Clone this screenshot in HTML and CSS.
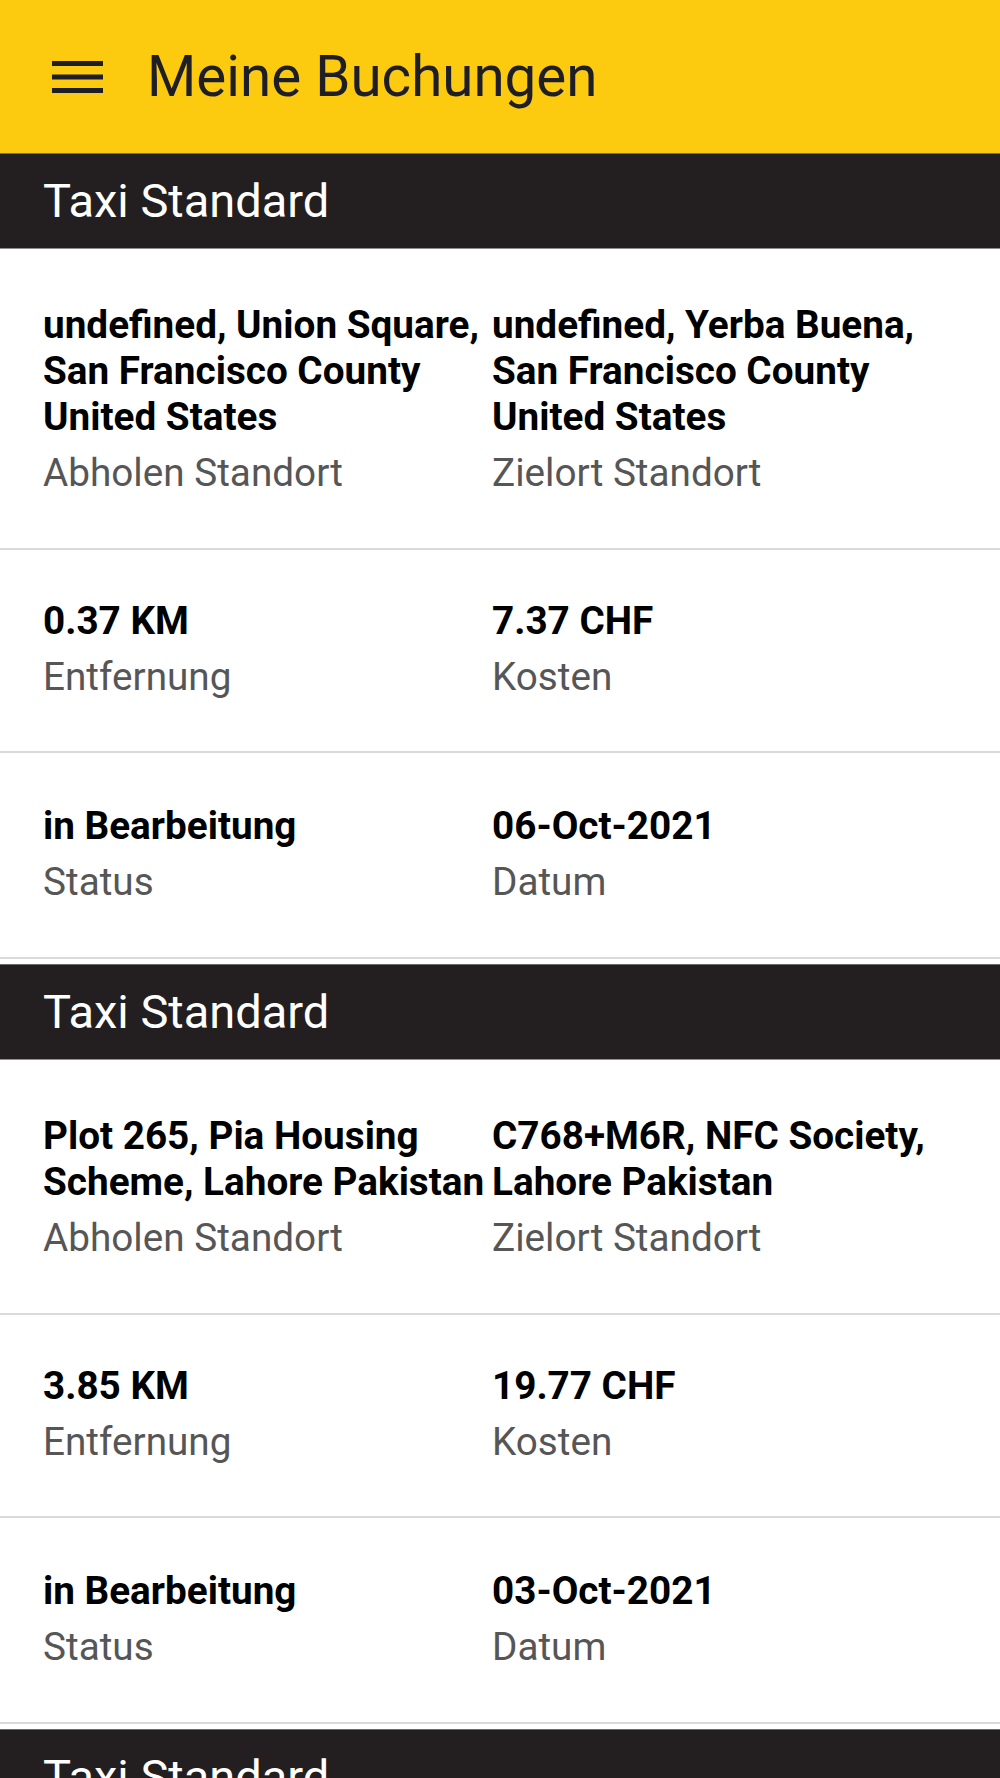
FILE: index.html
```html
<!DOCTYPE html>
<html lang="de">
<head>
    <meta charset="UTF-8">
    <meta name="viewport" content="width=device-width, initial-scale=1.0">
    <title>Meine Buchungen</title>
    <link rel="stylesheet" href="styles.css">
</head>
<body>
    <header class="toolbar">
        <button class="menu-btn" aria-label="Menü">
            <svg width="51" height="32" viewBox="0 0 51 32">
                <rect x="0" y="0" width="51" height="5"/>
                <rect x="0" y="13.5" width="51" height="5"/>
                <rect x="0" y="27" width="51" height="5"/>
            </svg>
        </button>
        <h1 class="toolbar-title">Meine Buchungen</h1>
    </header>

    <main class="booking-list">
        <!-- Buchung 1 -->
        <section class="booking">
            <h2 class="booking-title">Taxi Standard</h2>
            <div class="booking-row address-row">
                <div class="field">
                    <p class="field-value">undefined, Union Square, San Francisco County United States</p>
                    <p class="field-label">Abholen Standort</p>
                </div>
                <div class="field">
                    <p class="field-value">undefined, Yerba Buena, San Francisco County United States</p>
                    <p class="field-label">Zielort Standort</p>
                </div>
            </div>
            <div class="booking-row">
                <div class="field">
                    <p class="field-value">0.37 KM</p>
                    <p class="field-label">Entfernung</p>
                </div>
                <div class="field">
                    <p class="field-value">7.37 CHF</p>
                    <p class="field-label">Kosten</p>
                </div>
            </div>
            <div class="booking-row last-row">
                <div class="field">
                    <p class="field-value">in Bearbeitung</p>
                    <p class="field-label">Status</p>
                </div>
                <div class="field">
                    <p class="field-value">06-Oct-2021</p>
                    <p class="field-label">Datum</p>
                </div>
            </div>
        </section>

        <!-- Buchung 2 -->
        <section class="booking">
            <h2 class="booking-title">Taxi Standard</h2>
            <div class="booking-row address-row">
                <div class="field">
                    <p class="field-value">Plot 265, Pia Housing Scheme, Lahore Pakistan</p>
                    <p class="field-label">Abholen Standort</p>
                </div>
                <div class="field">
                    <p class="field-value">C768+M6R, NFC Society, Lahore Pakistan</p>
                    <p class="field-label">Zielort Standort</p>
                </div>
            </div>
            <div class="booking-row">
                <div class="field">
                    <p class="field-value">3.85 KM</p>
                    <p class="field-label">Entfernung</p>
                </div>
                <div class="field">
                    <p class="field-value">19.77 CHF</p>
                    <p class="field-label">Kosten</p>
                </div>
            </div>
            <div class="booking-row last-row">
                <div class="field">
                    <p class="field-value">in Bearbeitung</p>
                    <p class="field-label">Status</p>
                </div>
                <div class="field">
                    <p class="field-value">03-Oct-2021</p>
                    <p class="field-label">Datum</p>
                </div>
            </div>
        </section>

        <!-- Buchung 3 -->
        <section class="booking">
            <h2 class="booking-title">Taxi Standard</h2>
        </section>
    </main>
</body>
</html>
```

FILE: styles.css
```css
/* General Styles */
body {
    font-family: Roboto, 'Noto Sans', sans-serif;
    margin: 0;
    padding: 0;
    background-color: #ffffff;
    color: #000000;
}

p,
h1,
h2 {
    margin: 0;
}

/* Toolbar */
.toolbar {
    display: flex;
    align-items: center;
    height: 153px;
    padding-left: 52px;
    background-color: #fcca0e;
}

.menu-btn {
    display: flex;
    padding: 0;
    margin-right: 44px;
    border: none;
    background: none;
    fill: #1e1e26;
    cursor: pointer;
}

.toolbar-title {
    font-size: 56.5px;
    font-weight: 400;
    color: #1e1e26;
}

/* Booking cards */
.booking {
    margin-bottom: 5px;
}

.booking-title {
    height: 94px;
    padding: 0 43px;
    font-size: 47px;
    font-weight: 400;
    line-height: 94px;
    color: #ffffff;
    background-color: #231f20;
    border-top: 1px solid #6a6a6a;
    border-bottom: 1px solid #8e8e8e;
}

.booking-row {
    display: grid;
    grid-template-columns: 449px 1fr;
    padding: 48px 43px 51px;
    border-bottom: 2px solid #dadada;
}

.address-row {
    padding-top: 53px;
    padding-bottom: 52px;
}

.last-row {
    padding-top: 50px;
    padding-bottom: 52px;
}

.field-value {
    font-size: 38.7px;
    font-weight: 700;
    line-height: 46px;
}

.field-label {
    margin-top: 10px;
    font-size: 38.7px;
    line-height: 46px;
    color: #565656;
}
```
